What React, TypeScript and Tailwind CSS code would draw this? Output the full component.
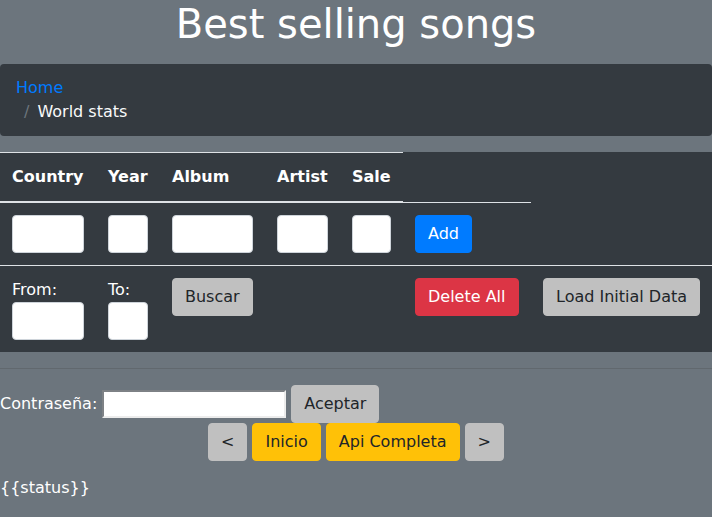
import React from 'react';

const cols = [96, 64, 105, 75, 63, 128, 181];

const headers = ['Country', 'Year', 'Album', 'Artist', 'Sale'];

export default function App() {
  const inputWidths = ['w-[72px]', 'w-[40px]', 'w-[81px]', 'w-[51px]', 'w-[39px]'];

  return (
    <div className="min-h-screen bg-[#6c757d] text-white font-['DejaVu_Sans',sans-serif] text-base leading-6">
      {/* Title */}
      <h1 className="text-center text-[40px] leading-[48px] font-normal mb-4">Best selling songs</h1>

      {/* Breadcrumb */}
      <nav>
        <ol className="bg-[#343a40] rounded px-4 py-3 mb-4">
          <li>
            <a href="#" className="text-[#007bff]">Home</a>
          </li>
          <li className="pl-2 text-[#f8f9fa]">
            <span className="pr-2 text-[#6c757d]">/</span>World stats
          </li>
        </ol>
      </nav>

      {/* Table */}
      <table className="w-full table-fixed bg-[#343a40] text-white">
        <colgroup>
          {cols.map((w, i) => (
            <col key={i} style={{ width: w }} />
          ))}
        </colgroup>
        <thead>
          <tr>
            {headers.map((h) => (
              <th
                key={h}
                className="text-left font-bold p-3 align-bottom border-t border-b-2 border-[#dee2e6]"
              >
                {h}
              </th>
            ))}
          </tr>
        </thead>
        <tbody>
          <tr>
            {inputWidths.map((w, i) => (
              <td key={i} className="p-3 align-top border-t border-[#dee2e6]">
                <input
                  type="text"
                  className={`${w} block h-[38px] bg-white border border-[#ced4da] rounded text-[#495057] px-3`}
                />
              </td>
            ))}
            <td className="p-3 align-top border-t border-[#dee2e6]">
              <button className="h-[38px] px-3 border border-[#007bff] bg-[#007bff] text-white rounded">
                Add
              </button>
            </td>
          </tr>
          <tr>
            <td className="p-3 align-top border-t border-[#dee2e6]">
              <label className="block">From:</label>
              <input
                type="text"
                className="w-[72px] block h-[38px] bg-white border border-[#ced4da] rounded px-3"
              />
            </td>
            <td className="p-3 align-top border-t border-[#dee2e6]">
              <label className="block">To:</label>
              <input
                type="text"
                className="w-[40px] block h-[38px] bg-white border border-[#ced4da] rounded px-3"
              />
            </td>
            <td className="p-3 align-top border-t border-[#dee2e6]">
              <button className="h-[38px] px-3 border border-[#c0c0c0] bg-[#c0c0c0] text-[#212529] rounded">
                Buscar
              </button>
            </td>
            <td className="p-3 align-top border-t border-[#dee2e6]" />
            <td className="p-3 align-top border-t border-[#dee2e6]" />
            <td className="p-3 align-top border-t border-[#dee2e6]">
              <button className="h-[38px] px-3 border border-[#dc3545] bg-[#dc3545] text-white rounded whitespace-nowrap">
                Delete All
              </button>
            </td>
            <td className="p-3 align-top border-t border-[#dee2e6]">
              <button className="h-[38px] px-3 border border-[#c0c0c0] bg-[#c0c0c0] text-[#212529] rounded whitespace-nowrap">
                Load Initial Data
              </button>
            </td>
          </tr>
        </tbody>
      </table>

      <hr className="my-4 border-0 border-t border-[#61686e]" />

      {/* Password */}
      <div className="flex items-center gap-[5px]">
        <label>Contraseña:</label>
        <input
          type="password"
          className="w-[184px] h-[28px] bg-white border-2 border-t-[#7d8185] border-l-[#7d8185] border-b-[#ececec] border-r-[#ececec] text-black px-[2px]"
        />
        <button className="h-[38px] px-3 border border-[#c0c0c0] bg-[#c0c0c0] text-[#212529] rounded">
          Aceptar
        </button>
      </div>

      {/* Pager */}
      <div className="flex justify-center gap-[5px]">
        <button className="h-[38px] px-3 border border-[#c0c0c0] bg-[#c0c0c0] text-[#212529] rounded">
          &lt;
        </button>
        <button className="h-[38px] px-3 border border-[#ffc107] bg-[#ffc107] text-[#212529] rounded">
          Inicio
        </button>
        <button className="h-[38px] px-3 border border-[#ffc107] bg-[#ffc107] text-[#212529] rounded">
          Api Completa
        </button>
        <button className="h-[38px] px-3 border border-[#c0c0c0] bg-[#c0c0c0] text-[#212529] rounded">
          &gt;
        </button>
      </div>

      <p className="mt-[15px]">{'{{status}}'}</p>
    </div>
  );
}
